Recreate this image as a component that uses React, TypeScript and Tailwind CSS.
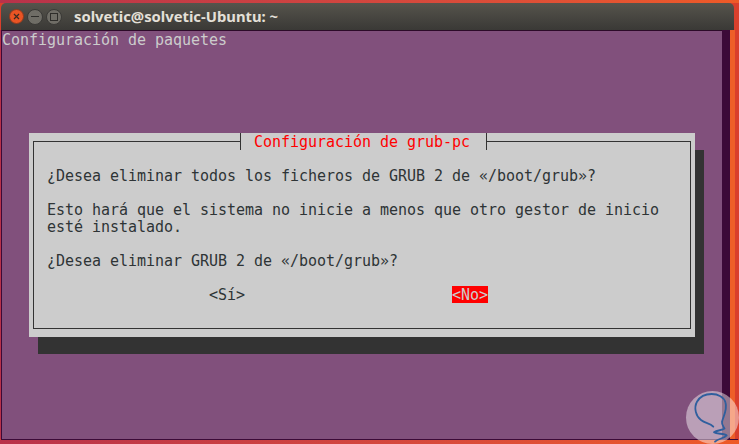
// Ubuntu terminal window showing the grub-pc debconf dialog.
// Text sits on the terminal's 9x17 character cell grid.

const MONO = "font-['DejaVu_Sans_Mono',monospace] text-[15px] leading-[19px] tracking-[-0.03px] whitespace-pre";

function WindowButtons() {
  return (
    <div className="flex items-center">
      <div className="w-[15px] h-[15px] rounded-full bg-[#ea5424] border border-[#8f3a1e] flex items-center justify-center">
        <svg width="7" height="7" viewBox="0 0 7 7" stroke="#3b2a20" strokeWidth="1.2">
          <path d="M1 1l5 5M6 1l-5 5" />
        </svg>
      </div>
      <div className="ml-[3px] w-[16px] h-[16px] rounded-full bg-[#6f6d66] border border-[#3a3936] flex items-center justify-center">
        <div className="w-[8px] h-[1px] bg-[#2e2d2a]" />
      </div>
      <div className="ml-[3px] w-[16px] h-[16px] rounded-full bg-[#6f6d66] border border-[#3a3936] flex items-center justify-center">
        <div className="w-[8px] h-[8px] border border-[#2e2d2a]" />
      </div>
    </div>
  );
}

function Watermark() {
  return (
    <div className="absolute left-[686px] top-[391px] w-[53px] h-[53px] rounded-full bg-white/45">
      <svg width="53" height="53" viewBox="0 0 53 53" fill="none" stroke="#2f5f9e" strokeWidth="1.8" strokeLinecap="round" strokeLinejoin="round">
        <path d="M27.3 35.7C24 32 19.5 32.5 15 29C10 25.5 7.5 17 11 10.7C14 5.5 20 3 25.7 3C32 3 38 6 39.5 11.5C41.5 18 38 24 36 30.7C35.5 33.5 37 35 38.5 37.5C36 39.5 31 39 28 41.3C31 43.5 38 42 40.7 44.5C38 47.5 32 47.5 29 50.7" />
      </svg>
    </div>
  );
}

export default function App() {
  return (
    <div className="relative w-[739px] h-[444px] overflow-hidden flex flex-col bg-[#d93f2c]">
      <div className="h-[3px] shrink-0 bg-gradient-to-r from-[#b8324a] to-[#ee5a27]" />

      <div className="h-[27px] shrink-0 ml-[1px] mr-[5px] rounded-t-[5px] flex items-center pl-[8px] bg-gradient-to-b from-[#56544c] to-[#3a3936]">
        <WindowButtons />
        <span className="ml-[12px] text-[14.8px] font-bold text-[#e4e0d8] font-['Noto_Sans',sans-serif] leading-none">
          solvetic@solvetic-Ubuntu: ~
        </span>
      </div>

      <div className="flex-1 flex min-h-0">
        <div className="w-[1px] bg-[#b8324a]" />
        <div className="w-[1px] bg-[#3c0a38]" />
        <main className="w-[720px] bg-[#81507c] border-t border-[#2c0a28]">
          <div className={`${MONO} text-[#cccccc] h-[17px]`}>Configuración de paquetes</div>

          <div className="ml-[27px] mt-[85px] w-[666px] h-[204px] pt-[8px] pl-[4px] bg-[#cccccc] shadow-[9px_17px_0_#333333]">
            <div className={`${MONO} relative w-[658px] h-[188px] border border-[#333333] pl-[13px] pt-[25px] text-[#2e3436]`}>
              <div className="absolute left-[206px] -top-[9px] w-[247px] h-[17px] bg-[#cccccc] border-x border-[#333333] pl-[13px] text-[#ff0000]">
                Configuración de grub-pc
              </div>
              <div className="h-[17px]">¿Desea eliminar todos los ficheros de GRUB 2 de «/boot/grub»?</div>
              <div className="h-[17px] mt-[17px]">Esto hará que el sistema no inicie a menos que otro gestor de inicio</div>
              <div className="h-[17px]">esté instalado.</div>
              <div className="h-[17px] mt-[17px]">¿Desea eliminar GRUB 2 de «/boot/grub»?</div>
              <div className="h-[17px] mt-[17px] flex">
                <span className="ml-[162px]">&lt;Sí&gt;</span>
                <span className="ml-[207px] w-[36px] h-[17px] bg-[#ff0000] text-[#cccccc]">&lt;No&gt;</span>
              </div>
            </div>
          </div>
        </main>
        <div className="w-[8px] bg-[#3c0a38]" />
        <div className="w-[5px] bg-[#ee5f28]" />
        <div className="w-[4px] bg-[#d93f2c]" />
      </div>

      <div className="h-[1px] shrink-0 mx-[1px] bg-[#3c0a38]" />
      <div className="h-[4px] shrink-0 bg-gradient-to-r from-[#b8324a] to-[#ee5a27]" />

      <Watermark />
    </div>
  );
}
